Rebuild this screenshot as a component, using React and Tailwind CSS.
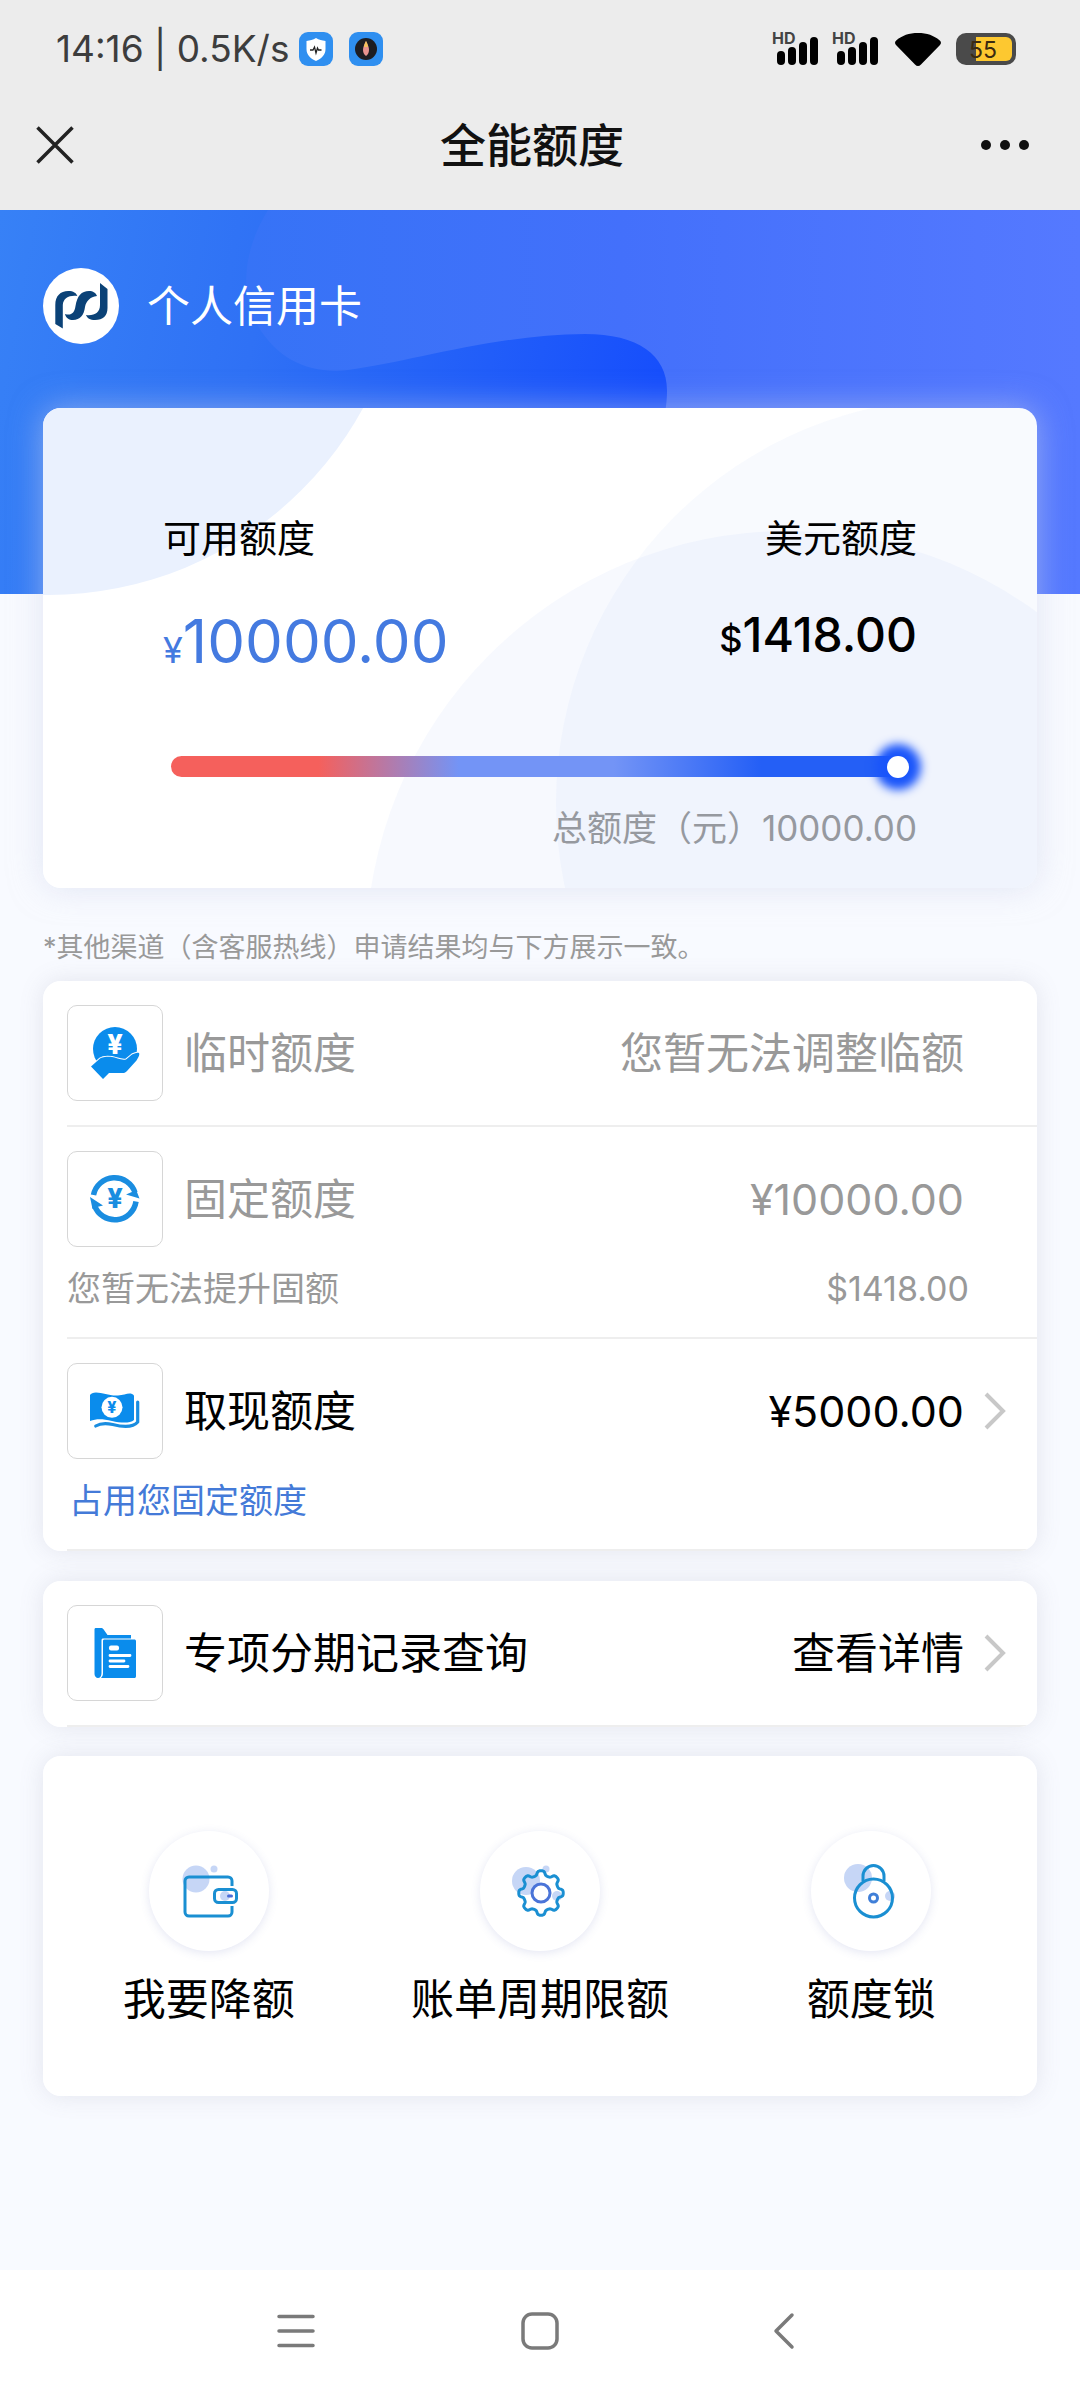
import React, { useState } from "react";

// Status bar

function Signal() {
  return (
    <svg width="50" height="44" viewBox="0 -4 50 44" aria-hidden="true">
      <text x="2" y="13" fontSize="16" fontWeight="700" fill="#444">
        HD
      </text>
      <rect x="7" y="20" width="8" height="14" rx="4" />
      <rect x="18" y="16" width="8" height="18" rx="4" />
      <rect x="29" y="11" width="8" height="23" rx="4" />
      <rect x="40" y="6" width="8" height="28" rx="4" />
    </svg>
  );
}

function StatusBar() {
  return (
    <div className="flex h-20 items-center justify-between pt-[18px] pr-16 pl-14">
      <div className="flex items-center text-[37px] leading-[48px] text-[#3d3d3d]">
        <span>14:16 | 0.5K/s</span>
        <svg className="ml-[10px]" width="34" height="34" viewBox="0 0 34 34" aria-hidden="true">
          <rect width="34" height="34" rx="9" fill="#2f8ff0" />
          <path d="M17 6c3 2 6 2.500 9.500 3v8c0 6-4 9.500-9.500 12-5.500-2.500-9.500-6-9.500-12V9C11 8.500 14 8 17 6z" fill="#fff" />
          <path d="M11 18h3l1.500-3 1.500 6 1.500-5 1 2h3" fill="none" stroke="#222" strokeWidth="1.300" />
        </svg>
        <svg className="ml-4" width="34" height="34" viewBox="0 0 34 34" aria-hidden="true">
          <rect width="34" height="34" rx="9" fill="#2f8ff0" />
          <circle cx="17" cy="17" r="11" fill="#1d1d22" />
          <path d="M17 9c2 4 3 6 3 9s-1.500 5-3 6c-1.500-1-3-3-3-6s1-5 3-9z" fill="#e8938f" />
          <path d="M17 9c1 2 2 4 2 6h-4c0-2 1-4 2-6z" fill="#f5c25c" />
        </svg>
      </div>
      <div className="flex items-center gap-[10px]">
        <Signal />
        <Signal />
        <svg width="56" height="36" viewBox="-2 0 56 36" aria-hidden="true">
          <path d="M26 35c-1 0-2-.5-3-1.500L4 14c-1.500-1.500-1.200-3.500.5-4.700C10 4.500 17 2 26 2s16 2.500 21.500 7.300c1.700 1.200 2 3.200.5 4.700L29 33.500c-1 1-2 1.500-3 1.500z" />
        </svg>
        <svg width="60" height="32" viewBox="0 0 60 32" aria-hidden="true">
          <rect width="60" height="32" rx="10" fill="#4a4a4a" />
          <path d="M20 4h30a6 6 0 0 1 6 6v12a6 6 0 0 1-6 6H20z" fill="#fdc830" />
          <text x="27" y="25" fontSize="23" textAnchor="middle" fill="#3a2a10">
            55
          </text>
        </svg>
      </div>
    </div>
  );
}

function TitleBar() {
  return (
    <header className="flex h-[130px] items-center justify-between pr-11 pl-9">
      <button type="button" aria-label="关闭" className="w-12">
        <svg width="38" height="38" viewBox="0 0 38 38" fill="none" stroke="#222" strokeWidth="3.500">
          <path d="M1.500 1.500l35 35M36.500 1.500l-35 35" />
        </svg>
      </button>
      <h1 className="text-[46px] leading-[60px] font-medium text-[#111]">全能额度</h1>
      <button type="button" aria-label="更多" className="w-14">
        <svg width="50" height="12" viewBox="0 0 50 12" fill="#111">
          <circle cx="6" cy="6" r="5" />
          <circle cx="25" cy="6" r="5" />
          <circle cx="44" cy="6" r="5" />
        </svg>
      </button>
    </header>
  );
}

// Hero

function HeroBackground() {
  return (
    <svg
      className="absolute inset-x-0 top-0 h-[384px] w-full"
      viewBox="0 0 1080 384"
      preserveAspectRatio="none"
      aria-hidden="true"
    >
      <defs>
        <linearGradient id="heroBase" x1="0" x2="667" y1="0" y2="120" gradientUnits="userSpaceOnUse">
          <stop offset="0" stopColor="#3781f6" />
          <stop offset="0.4" stopColor="#2f71f5" />
          <stop offset="1" stopColor="#174ffc" />
        </linearGradient>
        <linearGradient id="heroWave" x1="246" x2="1080" y1="0" y2="0" gradientUnits="userSpaceOnUse">
          <stop offset="0" stopColor="#3673f6" />
          <stop offset="0.45" stopColor="#4370fb" />
          <stop offset="1" stopColor="#5579ff" />
        </linearGradient>
      </defs>
      <rect width="1080" height="384" fill="url(#heroBase)" />
      <path
        d="M268 0C242 42 240 86 258 116c20 34 52 48 90 44 62-8 150-36 237-36 54 0 83 22 82 58 0 30-20 110-47 202h460V0z"
        fill="url(#heroWave)"
      />
    </svg>
  );
}

function BankLogo() {
  return (
    <svg width="76" height="76" viewBox="0 0 76 76" aria-hidden="true">
      <circle cx="38" cy="38" r="38" fill="#fff" />
      <g fill="#0b4277">
        <path d="M12.300 56V37c0-9 5-14 13-14 5 0 8 2 9 5-8-1-14 2-14.500 9v23.500z" />
        <path d="M22 46c6 2 9.500-1 10.500-8 1.500-10 6-15 13.500-15 4 0 7 2 8 5-7 1-11 5-12 11-1 8-5 13-12 13-4 0-7-2-8-6z" />
        <path d="M57 15l7.500 6v19c0 8-4.500 12-12.500 12-5 0-8-2-9-5 8 1 14-2 14-10z" />
      </g>
    </svg>
  );
}

function LimitCard() {
  const [limit, setLimit] = useState(10000);

  return (
    <section className="relative overflow-hidden rounded-[18px] bg-white px-[120px] pt-[106px] pb-10">
      <svg
        className="absolute inset-0 h-full w-full"
        viewBox="0 0 994 480"
        preserveAspectRatio="xMidYMid slice"
        aria-hidden="true"
      >
        <circle cx="5" cy="-172" r="359" fill="#eaf1fe" />
        <circle cx="745" cy="545" r="422" fill="#3f7af0" fillOpacity="0.045" />
        <circle cx="918" cy="395" r="405" fill="#3f7af0" fillOpacity="0.035" />
      </svg>
      <div className="relative">
        <div className="flex justify-between">
          <div>
            <h2 className="text-[38px] leading-[48px]">可用额度</h2>
            <p className="mt-[43px] text-[60px] leading-[72px] text-[#447ae0]">
              <span className="text-[36px]">¥</span>10000.00
            </p>
          </div>
          <div className="text-right">
            <h2 className="text-[38px] leading-[48px]">美元额度</h2>
            <p className="mt-[43px] text-[48px] leading-[60px] font-medium">
              <span className="text-[36px]">$</span>1418.00
            </p>
          </div>
        </div>
        <div className="mt-[70px] px-2">
          <input
            type="range"
            aria-label="总额度"
            min="0"
            max="10000"
            value={limit}
            onChange={(e) => setLimit(Number(e.target.value))}
            className="block h-[21px] w-full appearance-none rounded-full bg-[linear-gradient(90deg,#f5605c_0%,#f5605c_20%,#7394f6_39%,#7394f6_60%,#245ff6_80%,#245ff6_100%)] [&::-webkit-slider-thumb]:h-[22px] [&::-webkit-slider-thumb]:w-[22px] [&::-webkit-slider-thumb]:appearance-none [&::-webkit-slider-thumb]:rounded-full [&::-webkit-slider-thumb]:bg-white [&::-webkit-slider-thumb]:shadow-[0_0_10px_12px_#1a55fa]"
          />
        </div>
        <p className="mt-[31px] text-right text-[35px] leading-10 text-[#96999f]">总额度（元）10000.00</p>
      </div>
    </section>
  );
}

// List icons

function TempIcon() {
  return (
    <svg width="52" height="52" viewBox="0 0 52 52" fill="#0a8cec" aria-hidden="true">
      <circle cx="26" cy="22" r="22" />
      <text x="26" y="27" fontSize="27" fontWeight="800" textAnchor="middle" fill="#fff">
        ¥
      </text>
      <path
        d="M2 39.500l9-8c2-1.500 8-2 12-1.500s9 3.500 14 2.500l6-5c2-1 5-2.500 7-1.500 1 2-1 5-2.500 7.500L38 44c-1.500 1.700-3 2-5 2H20l-6 6z"
        stroke="#fff"
        strokeWidth="2"
        paintOrder="stroke"
      />
    </svg>
  );
}

function FixedIcon() {
  return (
    <svg width="52" height="52" viewBox="0 0 52 52" fill="#1a8de0" aria-hidden="true">
      <g fill="none" stroke="#1a8de0" strokeWidth="5.500">
        <path d="M4.500 22A21.500 21.500 0 0 1 46 19.500" />
        <path d="M47 28.500A21.500 21.500 0 0 1 5.500 32.500" />
      </g>
      <path d="M37 21.500l7-3 3-2 3.500 9z" />
      <path d="M14 32.500l-6 1.500-4.500 2L1 24z" />
      <text x="26" y="35" fontSize="27" fontWeight="800" textAnchor="middle">
        ¥
      </text>
    </svg>
  );
}

function CashIcon() {
  return (
    <svg width="52" height="52" viewBox="0 0 52 52" fill="#0a8cec" aria-hidden="true">
      <path d="M1 10c1-1.500 3-2.500 6-2.500 7 0 13 3.500 22 3 6 0 10-3 14-1.500 1.500.5 2 1 2 2.500V35c-4 3.500-13 3-22 1-9-2-15-2.500-22 0z" />
      <circle cx="23" cy="22.300" r="10.500" fill="#fff" />
      <text x="23" y="28" fontSize="16" fontWeight="800" textAnchor="middle">
        ¥
      </text>
      <path
        d="M48.700 17v20c-5 6-17 4.500-25 2.500-7-1.500-12-1.500-17 1.500"
        fill="none"
        stroke="#1a8de0"
        strokeWidth="3.200"
        strokeLinecap="round"
      />
    </svg>
  );
}

function RecordIcon() {
  return (
    <svg width="52" height="52" viewBox="0 0 52 52" fill="#0a8cec" aria-hidden="true">
      <path d="M5.500 2.500c0-1 .5-1.500 1.500-1.500h5c1.500 0 2 .5 3 2l3.500 5H42v3.500H14.500c-1.500 0-2 .5-2 2V46c0 3-1.500 5-3.500 5s-3.500-2-3.500-4z" />
      <path d="M15.500 12.500H45c1.500 0 2 .5 2 2V49c0 1.500-.5 2-2 2H12c1.500-1.500 2-3 2-5V14c0-1 .5-1.500 1.500-1.500z" />
      <rect x="20" y="18.500" width="10" height="5" rx="2" fill="#fff" />
      <path d="M21 28.500h20M21 34h14M21 39.500h18" stroke="#fff" strokeWidth="2.800" strokeLinecap="round" />
    </svg>
  );
}

function Chevron() {
  return (
    <svg width="22" height="38" viewBox="0 0 22 38" fill="none" stroke="#c8c8c8" strokeWidth="4" aria-hidden="true">
      <path d="M2 2l17 17L2 36" />
    </svg>
  );
}

function Row({ icon, title, value, note, noteValue, href, noteClass = "text-[#999]" }) {
  const Tag = href ? "a" : "div";
  return (
    <li className="ml-6 border-b-2 border-[#eee] py-6">
      <Tag href={href} className={href ? "flex items-center text-black" : "flex items-center text-[#999]"}>
        <span className="flex h-24 w-24 items-center justify-center rounded-[10px] border border-[#d6d6d6]">{icon}</span>
        <span className="ml-[21px] text-[43px] leading-[56px]">{title}</span>
        <span className="ml-auto text-[43px] leading-[56px]">{value}</span>
        <span className="mr-[31px] ml-5 w-[22px]">{href && <Chevron />}</span>
      </Tag>
      {note && (
        <p className={`mt-[18px] flex justify-between pr-[68px] text-[34px] leading-[48px] ${noteClass}`}>
          <span>{note}</span>
          <span>{noteValue}</span>
        </p>
      )}
    </li>
  );
}

// Feature icons

function WalletIcon() {
  return (
    <svg width="60" height="60" viewBox="0 0 60 60" fill="none" aria-hidden="true">
      <circle cx="17" cy="18" r="13.500" fill="#c6d6f6" />
      <circle cx="35" cy="8" r="3.500" fill="#c6d6f6" />
      <circle cx="46" cy="35" r="5" fill="#c6d6f6" />
      <g stroke="#1a8fd2" strokeWidth="3">
        <path d="M53 25v-5a4 4 0 0 0-4-4H10a4 4 0 0 0-4 4v31a4 4 0 0 0 4 4h39a4 4 0 0 0 4-4v-6" />
        <rect x="35.500" y="28.500" width="22" height="13" rx="4" />
      </g>
      <rect x="48" y="33.500" width="6" height="3" rx="1.500" fill="#4a6cd8" />
    </svg>
  );
}

function GearIcon() {
  // eight rounded teeth around the rim
  const points = Array.from({ length: 144 }, (_, i) => {
    const a = (i / 144) * Math.PI * 2;
    const r = 20 + 2.3 * Math.tanh(2 * Math.cos(a * 8));
    return `${(31 + r * Math.sin(a)).toFixed(1)},${(32 - r * Math.cos(a)).toFixed(1)}`;
  }).join(" ");

  return (
    <svg width="60" height="60" viewBox="0 0 60 60" fill="none" aria-hidden="true">
      <circle cx="16" cy="20" r="14" fill="#c6d6f6" />
      <circle cx="36" cy="8" r="3.500" fill="#c6d6f6" />
      <circle cx="47" cy="35" r="5" fill="#c6d6f6" />
      <polygon points={points} stroke="#1a8fd2" strokeWidth="3" strokeLinejoin="round" />
      <circle cx="31" cy="32" r="9" fill="#fff" stroke="#4a74d8" strokeWidth="3" />
    </svg>
  );
}

function LockIcon() {
  return (
    <svg width="60" height="60" viewBox="0 0 60 60" fill="none" aria-hidden="true">
      <circle cx="17" cy="17" r="14" fill="#c6d6f6" />
      <circle cx="49" cy="35" r="5" fill="#c6d6f6" />
      <g stroke="#1a8fd2" strokeWidth="3">
        <circle cx="32.500" cy="37" r="19" />
        <path d="M22 20v-5a10.500 10.500 0 0 1 21 0v5" />
      </g>
      <circle cx="32.500" cy="37" r="4" stroke="#3f7fd8" strokeWidth="3" />
    </svg>
  );
}

const features = [
  { label: "我要降额", icon: <WalletIcon /> },
  { label: "账单周期限额", icon: <GearIcon /> },
  { label: "额度锁", icon: <LockIcon /> },
];

const cardClass = "overflow-hidden rounded-[18px] bg-white";
const shadowClass = "rounded-[18px] shadow-[0_0_24px_rgba(120,120,140,0.16)]";

export default function App() {
  return (
    <div className="flex min-h-screen flex-col bg-[#f8faff] font-[Inter,'Noto_Sans_CJK_SC',sans-serif] text-black">
      <div className="bg-[#ececec]">
        <StatusBar />
        <TitleBar />
      </div>

      <main className="relative flex-1 px-[43px] pt-[58px]">
        <HeroBackground />
        <div className="relative">
          <div className="flex items-center gap-[28px] text-white">
            <BankLogo />
            <span className="text-[43px] leading-[56px]">个人信用卡</span>
          </div>
          <div className="mt-16 rounded-[18px] shadow-[0_0_32px_rgba(205,212,232,0.55)]">
            <LimitCard />
          </div>

          <p className="mt-10 mb-[13px] text-[27px] leading-10 text-[#999]">
            *其他渠道（含客服热线）申请结果均与下方展示一致。
          </p>

          <div className={shadowClass}>
            <ul className={cardClass}>
              <Row icon={<TempIcon />} title="临时额度" value="您暂无法调整临额" />
              <Row
                icon={<FixedIcon />}
                title="固定额度"
                value="¥10000.00"
                note="您暂无法提升固额"
                noteValue="$1418.00"
              />
              <Row
                icon={<CashIcon />}
                title="取现额度"
                value="¥5000.00"
                href="#cash"
                note="占用您固定额度"
                noteClass="pl-[2px] text-[#447ad8]"
              />
            </ul>
          </div>

          <div className={`mt-[30px] ${shadowClass}`}>
            <ul className={cardClass}>
              <Row icon={<RecordIcon />} title="专项分期记录查询" value="查看详情" href="#records" />
            </ul>
          </div>

          <div className={`mt-[29px] ${shadowClass}`}>
            <div className={`grid grid-cols-3 pt-[75px] pb-[69px] ${cardClass}`}>
              {features.map((item) => (
                <button key={item.label} type="button" className="flex flex-col items-center gap-5">
                  <span className="flex h-[120px] w-[120px] items-center justify-center rounded-full bg-white shadow-[0_2px_10px_rgba(90,100,180,0.16)]">
                    {item.icon}
                  </span>
                  <span className="text-[43px] leading-[56px]">{item.label}</span>
                </button>
              ))}
            </div>
          </div>
        </div>
      </main>

      {/* Android navigation bar */}
      <nav className="flex h-[130px] items-center justify-center gap-[204px] bg-white pb-2">
        <button type="button" aria-label="最近任务">
          <svg width="40" height="40" viewBox="0 0 40 40" stroke="#7a7a7a" strokeWidth="3.500" strokeLinecap="round">
            <path d="M3 5.500h34M3 20h34M3 34.500h34" />
          </svg>
        </button>
        <button type="button" aria-label="主屏幕">
          <svg width="40" height="40" viewBox="0 0 40 40" fill="none" stroke="#7a7a7a" strokeWidth="3.500">
            <rect x="3" y="3" width="34" height="34" rx="9" />
          </svg>
        </button>
        <button type="button" aria-label="返回">
          <svg
            width="40"
            height="40"
            viewBox="0 0 40 40"
            fill="none"
            stroke="#7a7a7a"
            strokeWidth="3.500"
            strokeLinecap="round"
            strokeLinejoin="round"
          >
            <path d="M28 4L12 20l16 16" />
          </svg>
        </button>
      </nav>
    </div>
  );
}
